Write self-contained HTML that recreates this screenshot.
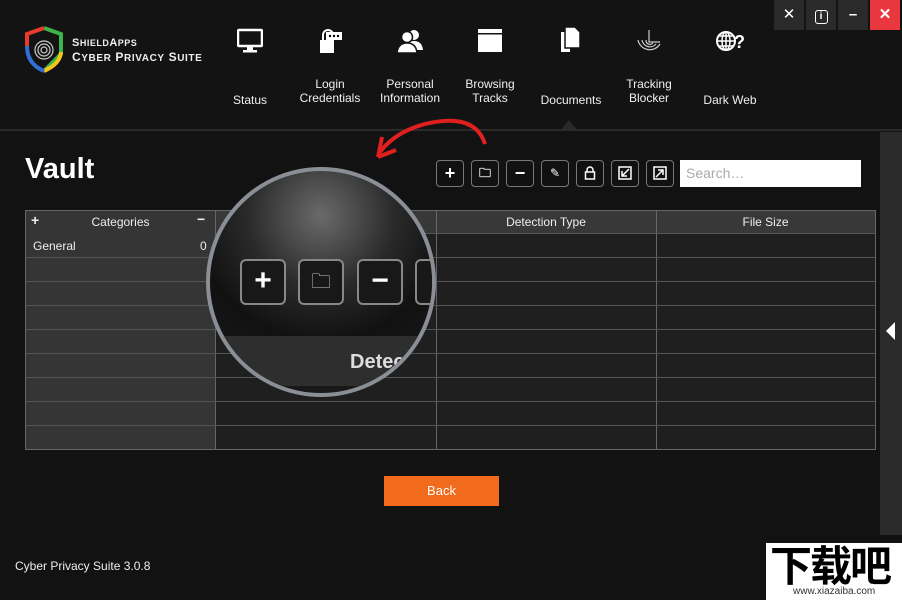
<!DOCTYPE html>
<html><head><meta charset="utf-8"><style>
*{margin:0;padding:0;box-sizing:border-box}
body{width:902px;height:600px;background:#121212;font-family:"Liberation Sans",sans-serif;color:#eee;position:relative;overflow:hidden}
.hdr{position:absolute;left:0;top:0;width:902px;height:131px;background:#131313;border-bottom:2px solid #2a2a2a}
.nav{position:absolute;text-align:center;font-size:12px;line-height:14px;color:#f0f0f0;width:80px}
.nav svg{display:block;margin:0 auto}
.wb{position:absolute;top:0;width:30px;height:30px;background:#2a2a2a;color:#fff;text-align:center;line-height:30px;font-size:15px}
.tb{position:absolute;top:160px;width:28px;height:27px;border:1.5px solid #777;border-radius:4px;background:#111;color:#fff;text-align:center;line-height:24px;font-size:18px;font-weight:bold}
</style></head><body>
<div class="hdr"></div>
<svg style="position:absolute;left:24px;top:26px" width="40" height="48" viewBox="0 0 40 48">
<path d="M20 2 L37 8 L37 28 L20 45" fill="none" stroke="#3db34a" stroke-width="4"/>
<path d="M37 26 Q36 38 20 45" fill="none" stroke="#f5c518" stroke-width="4"/>
<path d="M20 2 L3 8 L3 20" fill="none" stroke="#e63b2e" stroke-width="4"/>
<path d="M3 20 Q3 38 20 45" fill="none" stroke="#2f6fd6" stroke-width="4"/>
<circle cx="20" cy="24" r="9" fill="none" stroke="#ccc" stroke-width="1.2"/><circle cx="20" cy="24" r="6" fill="none" stroke="#ccc" stroke-width="1.2"/><circle cx="20" cy="24" r="3" fill="none" stroke="#ccc" stroke-width="1.2"/>
</svg>
<div style="position:absolute;left:72px;top:37px;font-size:11px;font-weight:bold;letter-spacing:.5px;color:#eee">S<span style="font-size:9px">HIELD</span>A<span style="font-size:9px">PPS</span></div>
<div style="position:absolute;left:72px;top:50px;font-size:12px;font-weight:bold;letter-spacing:.6px;color:#eee">C<span style="font-size:10px">YBER</span> P<span style="font-size:10px">RIVACY</span> S<span style="font-size:10px">UITE</span></div>
<div class="nav" style="left:210px;top:28px"><svg width="26" height="26" viewBox="0 0 26 26"><rect x="1" y="2" width="24" height="16" rx="1" fill="none" stroke="#fff" stroke-width="2.5"/><rect x="10" y="18" width="6" height="4" fill="#fff"/><rect x="6" y="22" width="14" height="2.5" fill="#fff"/></svg><div style="margin-top:39px">Status</div></div>
<div class="nav" style="left:290px;top:28px"><svg width="26" height="26" viewBox="0 0 26 26"><path d="M6 12 V7 a5 5 0 0 1 10 0" fill="none" stroke="#fff" stroke-width="2"/><rect x="3" y="12" width="14" height="13" fill="#fff"/><rect x="9" y="4" width="16" height="8" fill="#fff"/><circle cx="13" cy="8" r="1.2" fill="#000"/><circle cx="17" cy="8" r="1.2" fill="#000"/><circle cx="21" cy="8" r="1.2" fill="#000"/></svg><div style="margin-top:23px">Login<br>Credentials</div></div>
<div class="nav" style="left:370px;top:28px"><svg width="28" height="26" viewBox="0 0 28 26"><circle cx="18" cy="7" r="5" fill="#fff"/><path d="M10 22 Q11 13 18 13 Q26 13 27 22Z" fill="#fff"/><circle cx="11" cy="9" r="5.5" fill="#fff" stroke="#131313" stroke-width="1.5"/><path d="M1 25 Q2 15 11 15 Q20 15 21 25Z" fill="#fff" stroke="#131313" stroke-width="1.5"/></svg><div style="margin-top:23px">Personal<br>Information</div></div>
<div class="nav" style="left:450px;top:28px"><svg width="26" height="26" viewBox="0 0 26 26"><rect x="1" y="1" width="24" height="23" fill="#fff"/><rect x="3.5" y="6.5" width="19" height="15" fill="#fff"/><rect x="1" y="5" width="24" height="1.5" fill="#131313"/></svg><div style="margin-top:23px">Browsing<br>Tracks</div></div>
<div class="nav" style="left:531px;top:26px"><svg width="22" height="28" viewBox="0 0 22 28"><path d="M1 6 H10 V26 H1Z" fill="#fff"/><path d="M5 1 H15 L20 6 V22 H5Z" fill="#fff" stroke="#131313" stroke-width="1.5"/></svg><div style="margin-top:39px">Documents</div></div>
<div class="nav" style="left:609px;top:28px"><svg width="26" height="26" viewBox="0 0 26 26" fill="none" stroke="#ccc" stroke-width="1.2"><path d="M2 12 a12 12 0 0 0 22 4"/><path d="M6 12 a8 8 0 0 0 14 4"/><path d="M10 12 a4 4 0 0 0 7 3"/><path d="M13 2 V14 H24"/></svg><div style="margin-top:23px">Tracking<br>Blocker</div></div>
<div class="nav" style="left:690px;top:28px"><svg width="28" height="26" viewBox="0 0 28 26"><circle cx="10" cy="13" r="9" fill="none" stroke="#fff" stroke-width="2"/><path d="M10 4 V22 M1 13 H19 M3 8 H17 M3 18 H17" stroke="#fff" stroke-width="1.5"/><ellipse cx="10" cy="13" rx="4" ry="9" fill="none" stroke="#fff" stroke-width="1.5"/><text x="18" y="20" font-size="18" font-weight="bold" fill="#fff" font-family="Liberation Sans">?</text></svg><div style="margin-top:39px">Dark Web</div></div>
<div style="position:absolute;left:561px;top:120px;width:0;height:0;border-left:8px solid transparent;border-right:8px solid transparent;border-bottom:10px solid #2a2a2a"></div>
<div class="wb" style="left:774px">✕</div>
<div class="wb" style="left:806px"><span style="display:inline-block;width:13px;height:14px;border:1.5px solid #fff;border-radius:3px;font-size:10px;line-height:11px;font-weight:bold">i</span></div>
<div class="wb" style="left:838px;font-weight:bold">–</div>
<div class="wb" style="left:870px;background:#e8373e;font-weight:bold">✕</div>
<div style="position:absolute;left:880px;top:132px;width:22px;height:403px;background:#2b2b2b"></div>
<div style="position:absolute;left:886px;top:322px;width:0;height:0;border-top:9px solid transparent;border-bottom:9px solid transparent;border-right:9px solid #fff"></div>
<svg style="position:absolute;left:370px;top:112px" width="120" height="50" viewBox="0 0 120 50"><path d="M115 32 Q105 0 55 12 Q25 20 10 40" fill="none" stroke="#e0201e" stroke-width="4"/><path d="M8 45 L12 25 M8 45 L26 38" stroke="#e0201e" stroke-width="4" fill="none"/></svg>
<div style="position:absolute;left:25px;top:153px;font-size:29px;font-weight:bold;color:#fff">Vault</div>
<div class="tb" style="left:436px">+</div>
<div class="tb" style="left:471px;font-size:12px">🗀</div>
<div class="tb" style="left:506px">−</div>
<div class="tb" style="left:541px;font-size:12px;font-weight:normal">✎</div>
<div class="tb" style="left:576px"><svg width="12" height="14" viewBox="0 0 12 14" style="margin-top:5px"><path d="M3 6V4a3 3 0 0 1 6 0v2" fill="none" stroke="#fff" stroke-width="1.5"/><rect x="1.5" y="6" width="9" height="7" fill="none" stroke="#fff" stroke-width="1.5"/></svg></div>
<div class="tb" style="left:611px"><svg width="14" height="14" viewBox="0 0 14 14" style="margin-top:5px"><rect x="1" y="1" width="12" height="12" fill="none" stroke="#fff" stroke-width="1.5"/><path d="M11 3 L4 10 M4 5 V10 H9" fill="none" stroke="#fff" stroke-width="1.5"/></svg></div>
<div class="tb" style="left:646px"><svg width="14" height="14" viewBox="0 0 14 14" style="margin-top:5px"><rect x="1" y="1" width="12" height="12" fill="none" stroke="#fff" stroke-width="1.5"/><path d="M3 11 L10 4 M5 4 H10 V9" fill="none" stroke="#fff" stroke-width="1.5"/></svg></div>
<div style="position:absolute;left:680px;top:160px;width:181px;height:27px;background:#fff;color:#aaa;font-size:14px;line-height:27px;padding-left:6px">Search…</div>
<div style="position:absolute;left:25px;top:210px;width:851px;height:240px;border:1px solid #666;background:#1f1f1f"></div>
<div style="position:absolute;left:26px;top:211px;width:189px;height:238px;background:#353535"></div>
<div style="position:absolute;left:215px;top:211px;width:660px;height:23px;background:#383838"></div>
<div style="position:absolute;left:215px;top:210px;width:1px;height:240px;background:#666"></div>
<div style="position:absolute;left:436px;top:210px;width:1px;height:240px;background:#666"></div>
<div style="position:absolute;left:656px;top:210px;width:1px;height:240px;background:#666"></div>
<div style="position:absolute;left:26px;top:215px;width:189px;font-size:12px;text-align:center">Categories</div>
<div style="position:absolute;left:31px;top:212px;font-size:14px;font-weight:bold">+</div>
<div style="position:absolute;left:197px;top:211px;font-size:14px;font-weight:bold">−</div>
<div style="position:absolute;left:436px;top:215px;width:220px;font-size:12px;text-align:center">Detection Type</div>
<div style="position:absolute;left:656px;top:215px;width:219px;font-size:12px;text-align:center">File Size</div>
<div style="position:absolute;left:33px;top:239px;font-size:12px">General</div>
<div style="position:absolute;left:200px;top:239px;font-size:12px">0</div>
<div style="position:absolute;left:26px;top:257px;width:849px;height:169px;background:repeating-linear-gradient(#555 0 1px,transparent 1px 24px)"></div>
<div style="position:absolute;left:216px;top:233px;width:659px;height:1px;background:#555"></div>
<div style="position:absolute;left:206px;top:167px;width:230px;height:230px;border-radius:50%;background:radial-gradient(circle at 50% 20%,#6a6a6a 0,#2a2a2a 35%,#111 60%,#1e1e1e 100%);border:4px solid #8a8f96;overflow:hidden">
<div style="position:absolute;left:30px;top:88px;width:46px;height:46px;border:2px solid #888;border-radius:6px;background:#181818;color:#fff;font-size:30px;font-weight:bold;text-align:center;line-height:40px">+</div>
<div style="position:absolute;left:88px;top:88px;width:46px;height:46px;border:2px solid #888;border-radius:6px;background:#181818;color:#ccc;font-size:20px;text-align:center;line-height:42px">🗀</div>
<div style="position:absolute;left:147px;top:88px;width:46px;height:46px;border:2px solid #888;border-radius:6px;background:#181818;color:#fff;font-size:30px;font-weight:bold;text-align:center;line-height:40px">−</div>
<div style="position:absolute;left:205px;top:88px;width:46px;height:46px;border:2px solid #888;border-radius:6px;background:#181818"></div>
<div style="position:absolute;left:0;top:165px;width:230px;height:50px;background:#2e2e2e"></div>
<div style="position:absolute;left:140px;top:180px;font-size:20px;font-weight:bold;color:#ddd">Detec</div>
</div>
<div style="position:absolute;left:384px;top:476px;width:115px;height:30px;background:#f26b1d;color:#fff;font-size:13px;text-align:center;line-height:30px">Back</div>
<div style="position:absolute;left:15px;top:559px;font-size:12px;color:#eee">Cyber Privacy Suite 3.0.8</div>
<div style="position:absolute;left:766px;top:543px;width:136px;height:57px;background:#fff"></div>
<div style="position:absolute;left:770px;top:541px;font-family:'Noto Sans CJK SC',sans-serif;font-size:42px;font-weight:700;color:#000;line-height:46px;letter-spacing:-2px">下载吧</div>
<div style="position:absolute;left:793px;top:586px;font-size:10px;color:#333">www.xiazaiba.com</div>
</body></html>
